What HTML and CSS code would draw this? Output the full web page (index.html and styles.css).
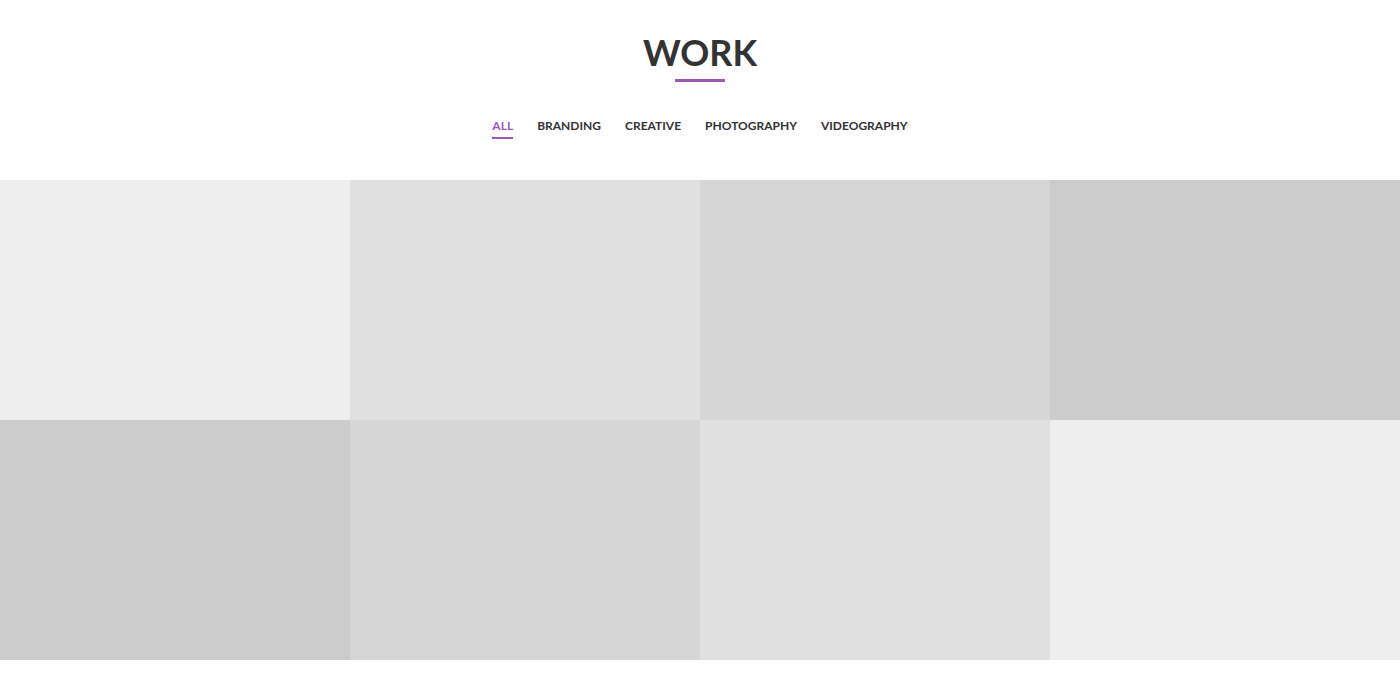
FILE: index.html
```html
<!DOCTYPE html>
<html lang="en">
<head>
<meta charset="utf-8">
<title>Work</title>
<link rel="stylesheet" href="styles.css">
</head>
<body>
<section class="work">
  <header class="work-head">
    <h2 class="work-title">WORK</h2>
    <span class="work-rule"></span>
  </header>
  <nav class="filters">
    <a class="filter active" href="#">ALL</a>
    <a class="filter" href="#">BRANDING</a>
    <a class="filter" href="#">CREATIVE</a>
    <a class="filter" href="#">PHOTOGRAPHY</a>
    <a class="filter" href="#">VIDEOGRAPHY</a>
  </nav>
  <div class="grid">
    <div class="tile t1"></div>
    <div class="tile t2"></div>
    <div class="tile t3"></div>
    <div class="tile t4"></div>
    <div class="tile t4"></div>
    <div class="tile t3"></div>
    <div class="tile t2"></div>
    <div class="tile t1"></div>
  </div>
</section>
</body>
</html>
```

FILE: styles.css
```css
* { box-sizing: border-box; }
html, body { margin: 0; padding: 0; background: #fff; }
body { font-family: Lato, "Open Sans", Arial, sans-serif; color: #333; }

.work { padding-top: 30px; }

.work-head {
  display: flex;
  flex-direction: column;
  align-items: center;
}
.work-title {
  margin: 0;
  font-size: 36px;
  line-height: 44px;
  font-weight: 700;
  color: #333;
}
.work-rule {
  display: block;
  width: 50px;
  height: 3px;
  margin-top: 5px;
  background: #9b59b6;
}

.filters {
  display: flex;
  justify-content: center;
  gap: 24px;
  margin-top: 35px;
  height: 63px;
}
.filter {
  font-size: 12px;
  font-weight: 700;
  line-height: 18px;
  color: #333;
  text-decoration: none;
  align-self: flex-start;
  padding-bottom: 2px;
  border-bottom: 2px solid transparent;
}
.filter.active {
  color: #9b59b6;
  border-bottom-color: #9b59b6;
}

.grid {
  display: grid;
  grid-template-columns: repeat(4, 1fr);
  grid-auto-rows: 240px;
}
.t1 { background: #eeeeee; }
.t2 { background: #e0e0e0; }
.t3 { background: #d6d6d6; }
.t4 { background: #cccccc; }
```
